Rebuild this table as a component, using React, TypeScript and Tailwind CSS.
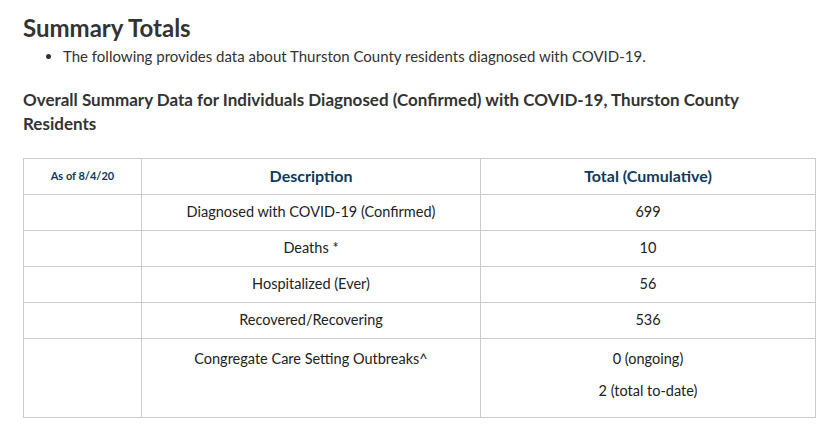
const rows: { label: string; values: string[] }[] = [
    { label: "Diagnosed with COVID-19 (Confirmed)", values: ["699"] },
    { label: "Deaths *", values: ["10"] },
    { label: "Hospitalized (Ever)", values: ["56"] },
    { label: "Recovered/Recovering", values: ["536"] },
    { label: "Congregate Care Setting Outbreaks^", values: ["0 (ongoing)", "2 (total to-date)"] }
]

function App() {
    const multi = (n: number) => n > 1

    return (
        <div className="bg-white min-h-screen px-[23px] pt-[12px] text-[#333] font-['Lato','Liberation_Sans',sans-serif]">
            <h2 className="text-[24px] leading-[32px] font-bold">
                Summary Totals
            </h2>

            <ul className="list-disc pl-[40px] mt-[1px] text-[15px] leading-[22px]">
                <li>The following provides data about Thurston County residents diagnosed with COVID-19.</li>
            </ul>

            <h4 className="mt-[21px] max-w-[760px] text-[17px] leading-[24px] font-bold">
                Overall Summary Data for Individuals Diagnosed (Confirmed) with COVID-19, Thurston County Residents
            </h4>

            <table className="mt-[22px] w-[793px] border-collapse border border-[#ccc] text-[14.5px] text-[#222]">
                <thead>
                    <tr>
                        <th className="h-[35.5px] w-[118px] border border-[#ccc] text-[11px] font-bold text-[#0e3a5c]">
                            As of 8/4/20
                        </th>
                        <th className="h-[35.5px] w-[339px] border border-[#ccc] text-[16px] font-bold text-[#0e3a5c]">
                            Description
                        </th>
                        <th className="h-[35.5px] border border-[#ccc] text-[16px] font-bold text-[#0e3a5c]">
                            Total (Cumulative)
                        </th>
                    </tr>
                </thead>
                <tbody>
                    {
                        rows.map(
                            row => (
                                <tr key={row.label}>
                                    <td className="h-[36px] border border-[#ccc]"></td>
                                    <td className={"h-[36px] border border-[#ccc] text-center align-top leading-[22px] " + (multi(row.values.length) ? "pt-[9px]" : "py-[6px]")}>
                                        {row.label}
                                    </td>
                                    <td className={"h-[36px] border border-[#ccc] text-center align-top leading-[22px] " + (multi(row.values.length) ? "pt-[9px] pb-[6px]" : "py-[6px]")}>
                                        {
                                            row.values.map(
                                                (value, i) => (
                                                    <p key={value} className={multi(row.values.length) ? (i === 0 ? "mb-[10px]" : "mb-[9px]") : ""}>
                                                        {value}
                                                    </p>
                                                )
                                            )
                                        }
                                    </td>
                                </tr>
                            )
                        )
                    }
                </tbody>
            </table>
        </div>
    )
}

export default App
